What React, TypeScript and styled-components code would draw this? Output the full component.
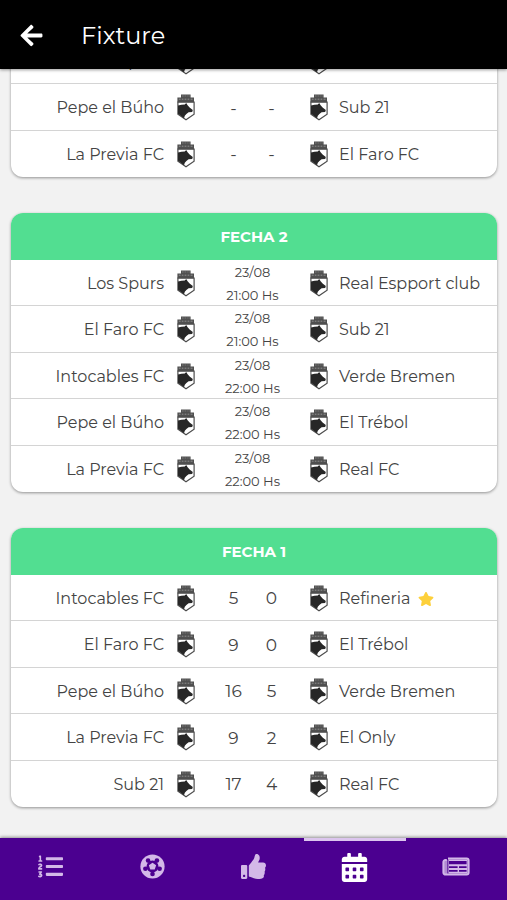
import React from "react";
import styled, { createGlobalStyle } from "styled-components";
import {
  FaArrowLeft,
  FaCalendarAlt,
  FaListOl,
  FaStar,
  FaThumbsUp,
} from "react-icons/fa";

const GlobalStyle = createGlobalStyle`
  *, *::before, *::after { box-sizing: border-box; }
  body {
    margin: 0;
    background: #f2f2f2;
    color: #444;
    font-family: Montserrat, Inter, sans-serif;
  }
`;

const Screen = styled.div`
  display: flex;
  flex-direction: column;
  height: 100vh;
`;

const TopBar = styled.header`
  display: flex;
  flex: none;
  align-items: center;
  gap: 37px;
  height: 69px;
  padding: 2px 19px 0;
  background: #000;
  color: #fff;
  box-shadow: 0 1px 3px rgba(0, 0, 0, 0.4);
  z-index: 1;
`;

const BackButton = styled.button`
  display: flex;
  padding: 0;
  border: 0;
  background: none;
  color: inherit;
  font-size: 25px;
  cursor: pointer;
`;

const Title = styled.h1`
  margin: 0;
  font-size: 24px;
  font-weight: 400;
  line-height: 32px;
`;

const Rounds = styled.main`
  display: flex;
  flex: 1;
  flex-direction: column;
  justify-content: flex-end;
  gap: 36px;
  min-height: 0;
  overflow: hidden;
  padding: 0 10px 31px 11px;
`;

const Card = styled.section`
  flex: none;
  overflow: hidden;
  border-radius: 12px;
  background: #fff;
  box-shadow: 0 1px 3px rgba(0, 0, 0, 0.4);
`;

const RoundTitle = styled.h2`
  margin: 0;
  background: #52de91;
  color: #fff;
  font-size: 15px;
  font-weight: 700;
  line-height: 47px;
  text-align: center;
`;

const Matches = styled.ul`
  margin: 0;
  padding: 0;
  list-style: none;
`;

const Match = styled.li`
  display: grid;
  grid-template-columns: minmax(0, 1fr) 20px 113px 20px minmax(0, 1fr);
  align-items: center;
  height: 46px;
  padding-right: 3px;

  &:nth-child(even) {
    height: 47px;
  }

  &:not(:last-child) {
    box-shadow: inset 0 -1px #d4d4d4;
  }
`;

const Team = styled.span<{ $side: "home" | "away" }>`
  display: flex;
  align-items: center;
  justify-content: ${({ $side }) => ($side === "home" ? "flex-end" : "flex-start")};
  gap: 7px;
  padding: ${({ $side }) => ($side === "home" ? "1px 12px 0 0" : "1px 0 0 10px")};
  font-size: 16px;
  line-height: 24px;
  white-space: nowrap;
`;

const Favorite = styled(FaStar)`
  color: #fdd03b;
  font-size: 16px;
`;

const Scores = styled.div`
  display: grid;
  grid-template-columns: 38px 38px;
  justify-content: center;
  font-size: 17px;
  line-height: 24px;
  text-align: center;
`;

const Kickoff = styled.time`
  padding-top: 1px;
  font-size: 13px;
  line-height: 23px;
  text-align: center;
`;

const DateLine = styled.span`
  display: block;
`;

const CrestArt = styled.svg`
  display: block;
  width: 20px;
  height: 27px;
`;

const TabBar = styled.nav`
  display: grid;
  flex: none;
  grid-template-columns: repeat(5, 1fr);
  height: 62px;
  background: #4b0090;
  box-shadow: 0 -1px 3px rgba(0, 0, 0, 0.4);
  z-index: 1;
`;

const Tab = styled.button<{ $active: boolean }>`
  display: flex;
  align-items: center;
  justify-content: center;
  padding: ${({ $active }) => ($active ? "0 0 6px" : "0 0 8px")};
  border: 0;
  border-top: 3px solid ${({ $active }) => ($active ? "#dcc6ee" : "transparent")};
  background: none;
  color: ${({ $active }) => ($active ? "#fff" : "#d3b8e8")};
  font-size: ${({ $active }) => ($active ? "29px" : "25px")};
  cursor: pointer;
`;

function Crest() {
  return (
    <CrestArt viewBox="0 0 20 27" aria-hidden="true">
      <path d="M5 .6h9.6v2.8h3.4v5H1.4v-5H5z" fill="#505050" />
      <path d="M6 2h1.6M8.6 2h1.2M10.8 2h.8M12.6 2h1" stroke="#8c8c8c" strokeWidth=".8" />
      <path d="M2.8 5.2h1.8M5.8 5.2h1.6M8.6 5.2h1.8M11.6 5.2h1.7M14.6 5.2h2" stroke="#969696" strokeWidth=".9" />
      <path d="M1.9 8.2h16.2v12L10 25.8l-8.1-5.6z" fill="#fff" stroke="#4c4c4c" strokeWidth="1.2" />
      <path
        d="M2 11.6l3.4-.8 3.4-.2 1.4-1.6 1.4 2.3 2 2.2 3.2 2.6-.6 1.8-3.6.4-2.2 1.6-1.6 1.9-.8 2.5L2 19.8z"
        fill="#272727"
      />
    </CrestArt>
  );
}

function SoccerIcon() {
  return (
    <svg width="1em" height="1em" viewBox="0 0 26 26" aria-hidden="true">
      <circle cx="13" cy="13" r="12.6" fill="currentColor" />
      <g fill="#4b0090">
        <circle cx="13" cy="13" r="6.2" />
        <circle cx="8.4" cy="6.7" r="2.4" />
        <circle cx="17.6" cy="6.7" r="2.4" />
        <circle cx="20.4" cy="15.4" r="2.4" />
        <circle cx="13" cy="20.8" r="2.4" />
        <circle cx="5.6" cy="15.4" r="2.4" />
      </g>
      <path d="M13 9.1l3.8 2.7-1.5 4.4h-4.6l-1.5-4.4z" fill="currentColor" />
    </svg>
  );
}

function NewsIcon() {
  return (
    <svg width="28" height="19" viewBox="0 0 28 19" aria-hidden="true">
      <path
        d="M6 1.4h18.6a2 2 0 0 1 2 2v12.2a2 2 0 0 1-2 2H3.6a2.2 2.2 0 0 1-2.2-2.2V5a2 2 0 0 1 2-2H4.8"
        fill="none"
        stroke="currentColor"
        strokeWidth="2"
      />
      <path d="M1.4 3h4v14.6h-2a2 2 0 0 1-2-2z" fill="currentColor" opacity=".75" />
      <path d="M6.4 2.4h19.2v14.2H6.4z" fill="currentColor" />
      <path
        d="M7 4h17.6v3.2H7zM7 9.2h8.6v1.8H7zM17 9.2h7.6v1.8H17zM7 13h8.6v1.8H7zM17 13h7.6v1.8H17z"
        fill="#4b0090"
      />
    </svg>
  );
}

type MatchData = {
  home: string;
  away: string;
  score?: [string, string];
  kickoff?: [string, string];
  favorite?: boolean;
};

const rounds: { name: string; matches: MatchData[] }[] = [
  {
    name: "FECHA 3",
    matches: [
      { home: "Los Spurs", away: "Refineria", score: ["-", "-"] },
      { home: "Pepe el Búho", away: "Sub 21", score: ["-", "-"] },
      { home: "La Previa FC", away: "El Faro FC", score: ["-", "-"] },
    ],
  },
  {
    name: "FECHA 2",
    matches: [
      { home: "Los Spurs", away: "Real Espport club", kickoff: ["23/08", "21:00 Hs"] },
      { home: "El Faro FC", away: "Sub 21", kickoff: ["23/08", "21:00 Hs"] },
      { home: "Intocables FC", away: "Verde Bremen", kickoff: ["23/08", "22:00 Hs"] },
      { home: "Pepe el Búho", away: "El Trébol", kickoff: ["23/08", "22:00 Hs"] },
      { home: "La Previa FC", away: "Real FC", kickoff: ["23/08", "22:00 Hs"] },
    ],
  },
  {
    name: "FECHA 1",
    matches: [
      { home: "Intocables FC", away: "Refineria", score: ["5", "0"], favorite: true },
      { home: "El Faro FC", away: "El Trébol", score: ["9", "0"] },
      { home: "Pepe el Búho", away: "Verde Bremen", score: ["16", "5"] },
      { home: "La Previa FC", away: "El Only", score: ["9", "2"] },
      { home: "Sub 21", away: "Real FC", score: ["17", "4"] },
    ],
  },
];

const tabs = [
  { label: "Posiciones", Icon: FaListOl },
  { label: "Partidos", Icon: SoccerIcon },
  { label: "Votos", Icon: FaThumbsUp },
  { label: "Fixture", Icon: FaCalendarAlt },
  { label: "Noticias", Icon: NewsIcon },
];

export default function App() {
  return (
    <Screen>
      <GlobalStyle />
      <TopBar>
        <BackButton aria-label="Volver">
          <FaArrowLeft />
        </BackButton>
        <Title>Fixture</Title>
      </TopBar>
      <Rounds>
        {rounds.map((round) => (
          <Card key={round.name}>
            <RoundTitle>{round.name}</RoundTitle>
            <Matches>
              {round.matches.map((match) => (
                <Match key={match.home}>
                  <Team $side="home">{match.home}</Team>
                  <Crest />
                  {match.kickoff ? (
                    <Kickoff>
                      <DateLine>{match.kickoff[0]}</DateLine>
                      <DateLine>{match.kickoff[1]}</DateLine>
                    </Kickoff>
                  ) : (
                    <Scores>
                      {match.score?.map((value, index) => (
                        <span key={index}>{value}</span>
                      ))}
                    </Scores>
                  )}
                  <Crest />
                  <Team $side="away">
                    {match.away}
                    {match.favorite && <Favorite />}
                  </Team>
                </Match>
              ))}
            </Matches>
          </Card>
        ))}
      </Rounds>
      <TabBar>
        {tabs.map(({ label, Icon }) => (
          <Tab key={label} aria-label={label} $active={label === "Fixture"}>
            <Icon />
          </Tab>
        ))}
      </TabBar>
    </Screen>
  );
}
